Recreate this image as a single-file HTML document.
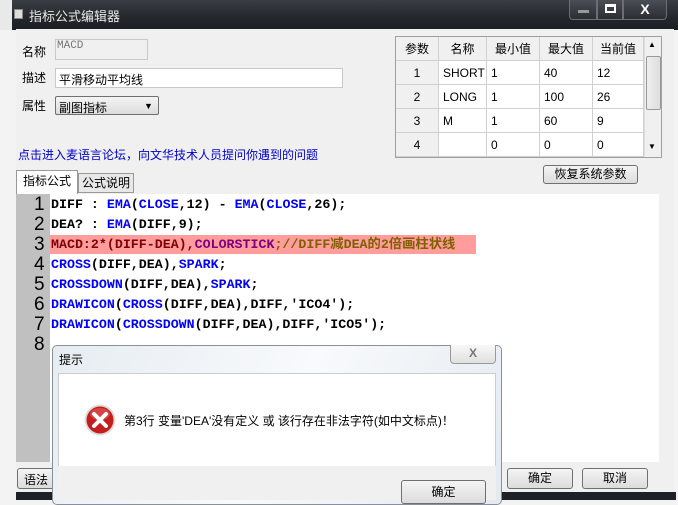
<!DOCTYPE html><html><head><meta charset="utf-8"><style>
*{margin:0;padding:0;box-sizing:border-box}
body{width:678px;height:500px;overflow:hidden;position:relative;background:#f3f3f3;font-family:"Liberation Sans","Noto Sans CJK SC",sans-serif;font-size:12px;color:#000}
.a{position:absolute}
.title{left:12px;top:0;width:666px;height:30px;background:linear-gradient(#3a3e44,#23272b 60%,#1b1e22)}
.wb{top:0;height:20px;border:1px solid #6b6f75;border-top:none;background:linear-gradient(#4a4e55,#2b2e33)}
.main{left:16px;top:29px;width:658px;height:463px;background:#f0f0f0}
.inp{background:#fff;border:1px solid #c8c8c8}
table{border-collapse:collapse;font-size:12px}
td{border:1px solid #d0d0d0;height:24px;padding-left:4px;background:#fff}
th{border:1px solid #d0d0d0;font-weight:normal;background:#f0f0f0;height:24px}
.btn{border:1px solid #707070;border-radius:3px;background:linear-gradient(#f4f4f4,#dcdcdc);text-align:center}
.code{font-family:"Liberation Mono","Noto Sans CJK SC",monospace;font-size:13.3px;line-height:20px;white-space:pre;left:51px;font-weight:bold}
.b{color:#0000ff}.p{color:#800080}
.ln{font-family:"Liberation Sans",sans-serif;font-size:19px;left:34px;line-height:20px}
</style></head><body>
<div class="a title"></div>
<div class="a" style="left:0;top:0;width:12px;height:30px;background:#e9e9e9"></div>
<div class="a" style="left:14px;top:9px;width:9px;height:10px;background:#ddd;border:1px solid #888"></div>
<div class="a" style="left:29px;top:6px;color:#e8e8e8;font-size:13px">指标公式编辑器</div>
<div class="a wb" style="left:569px;width:28px;border-radius:0 0 0 4px"><div class="a" style="left:8px;top:10px;width:11px;height:3px;background:#999"></div></div>
<div class="a wb" style="left:597px;width:26px"><div class="a" style="left:7px;top:4px;width:11px;height:9px;border:2px solid #fff;border-top-width:3px"></div></div>
<div class="a wb" style="left:623px;width:44px;border-radius:0 0 4px 0;color:#fff;font-weight:bold;font-size:14px;text-align:center;line-height:18px">X</div>
<div class="a main"></div>
<div class="a" style="left:22px;top:43px">名称</div>
<div class="a" style="left:55px;top:39px;width:93px;height:21px;border:1px solid #c8c8c8;background:#f0f0f0;color:#777;font-family:'Liberation Mono';font-size:11px;padding-left:1px">MACD</div>
<div class="a" style="left:22px;top:69px">描述</div>
<div class="a inp" style="left:55px;top:68px;width:288px;height:20px;padding:2px 3px">平滑移动平均线</div>
<div class="a" style="left:22px;top:97px">属性</div>
<div class="a btn" style="left:55px;top:96px;width:104px;height:19px;text-align:left;padding:2px 3px;border-radius:2px">副图指标<span class="a" style="left:88px;top:0;font-size:9px;line-height:18px">▼</span></div>
<div class="a" style="left:18px;top:146px;color:#0000cc">点击进入麦语言论坛，向文华技术人员提问你遇到的问题</div>
<div class="a" style="left:395px;top:36px;width:267px;height:122px;border:1px solid #a0a0a0;overflow:hidden;background:#fff">
<table style="width:249px;margin:-1px"><tr><th style="width:43px">参数</th><th style="width:48px">名称</th><th style="width:53px">最小值</th><th style="width:53px">最大值</th><th>当前值</th></tr>
<tr><td style="text-align:center;background:#f0f0f0;padding:0">1</td><td>SHORT</td><td>1</td><td>40</td><td>12</td></tr>
<tr><td style="text-align:center;background:#f0f0f0;padding:0">2</td><td>LONG</td><td>1</td><td>100</td><td>26</td></tr>
<tr><td style="text-align:center;background:#f0f0f0;padding:0">3</td><td>M</td><td>1</td><td>60</td><td>9</td></tr>
<tr><td style="text-align:center;background:#f0f0f0;padding:0">4</td><td></td><td>0</td><td>0</td><td>0</td></tr></table>
<div class="a" style="left:248px;top:0;width:18px;height:122px;background:#f0f0f0;border-left:1px solid #ddd"><div class="a" style="left:3px;top:3px;font-size:8px">▲</div><div class="a" style="left:1px;top:19px;width:15px;height:54px;border:1px solid #999;border-radius:2px;background:linear-gradient(90deg,#eee,#ddd)"></div><div class="a" style="left:3px;top:105px;font-size:8px">▼</div></div></div>
<div class="a btn" style="left:543px;top:165px;width:95px;height:19px;line-height:17px">恢复系统参数</div>
<div class="a" style="left:78px;top:173px;width:56px;height:20px;border:1px solid #999;background:#e8e8e8;text-align:center;line-height:18px">公式说明</div>
<div class="a" style="left:16px;top:170px;width:62px;height:24px;border:1px solid #999;border-bottom:none;background:#fff;text-align:center;line-height:20px;z-index:2">指标公式</div>
<div class="a" style="left:16px;top:194px;width:643px;height:268px;background:#fff"></div>
<div class="a" style="left:16px;top:194px;width:34px;height:268px;background:#c0c0c0"></div>
<div class="a" style="left:50px;top:235px;width:426px;height:19px;background:#ff9c9c"></div>
<div class="a ln" style="top:195px">1<br>2<br>3<br>4<br>5<br>6<br>7<br>8</div>
<div class="a code" style="top:195px">DIFF : <span class="b">EMA</span>(<span class="b">CLOSE</span>,12) - <span class="b">EMA</span>(<span class="b">CLOSE</span>,26);
DEA? : <span class="b">EMA</span>(DIFF,9);
<span style="color:#800000">MACD:2*(DIFF-DEA),</span><span class="p">COLORSTICK</span><span style="color:#806000">;//DIFF减DEA的2倍画柱状线</span>
<span class="b">CROSS</span>(DIFF,DEA),<span class="b">SPARK</span>;
<span class="b">CROSSDOWN</span>(DIFF,DEA),<span class="b">SPARK</span>;
<span class="b">DRAWICON</span>(<span class="b">CROSS</span>(DIFF,DEA),DIFF,'ICO4');
<span class="b">DRAWICON</span>(<span class="b">CROSSDOWN</span>(DIFF,DEA),DIFF,'ICO5');</div>
<div class="a btn" style="left:17px;top:468px;width:50px;height:21px;text-align:left;padding:2px 6px">语法</div>
<div class="a btn" style="left:507px;top:468px;width:66px;height:21px;line-height:19px">确定</div>
<div class="a btn" style="left:582px;top:468px;width:66px;height:21px;line-height:19px">取消</div>
<div class="a" style="left:16px;top:492px;width:660px;height:8px;background:#1e2226"></div>
<div class="a" style="left:52px;top:345px;width:450px;height:160px;background:linear-gradient(120deg,#e6ecf2,#f8fafc 50%,#e3e9ef);border:1px solid #8a9098;border-radius:5px"></div>
<div class="a" style="left:59px;top:351px">提示</div>
<div class="a" style="left:450px;top:345px;width:46px;height:19px;border:1px solid #999;border-top:none;border-radius:0 0 4px 4px;background:linear-gradient(#f8f8f8,#e0e0e0);text-align:center;color:#777;font-weight:bold;font-size:12px;line-height:17px">X</div>
<div class="a" style="left:58px;top:373px;width:438px;height:93px;background:#fff;border:1px solid #ccc;border-bottom:none"></div>
<div class="a" style="left:58px;top:466px;width:438px;height:34px;background:#f0f0f0"></div>
<svg class="a" style="left:84px;top:404px" width="32" height="32"><circle cx="16" cy="16" r="15.5" fill="#ddd"/><circle cx="16" cy="16" r="13.5" fill="#c41e1e"/><ellipse cx="16" cy="10" rx="10" ry="6" fill="#e86a6a" opacity=".5"/><path d="M10 10L22 22M22 10L10 22" stroke="#fff" stroke-width="4" stroke-linecap="round"/></svg>
<div class="a" style="left:124px;top:412px">第3行 变量'DEA'没有定义 或 该行存在非法字符(如中文标点)！</div>
<div class="a btn" style="left:401px;top:480px;width:85px;height:24px;line-height:22px">确定</div>
</body></html>
